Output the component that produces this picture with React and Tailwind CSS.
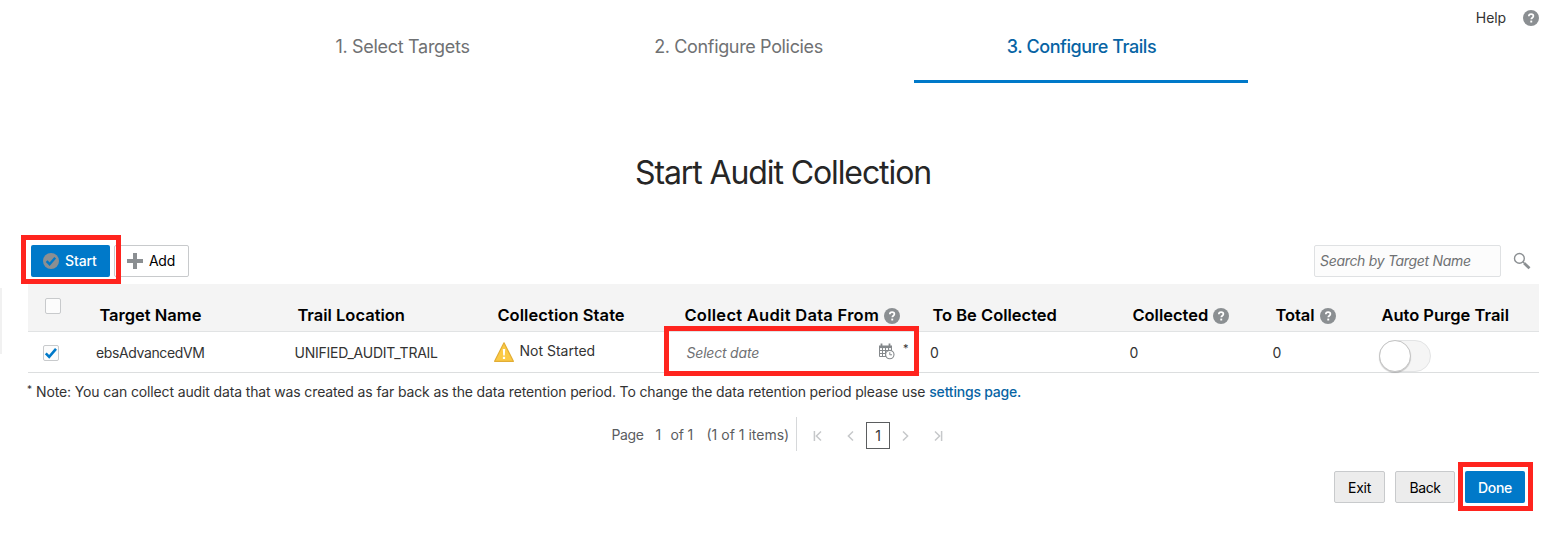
import React from "react";

const COLS = "grid grid-cols-[64px_198px_200px_187px_248px_200px_143px_106px_165px]";

function HelpIcon({ className = "" }) {
  return (
    <svg width="16" height="16" viewBox="0 0 16 16" className={"shrink-0 " + className}>
      <circle cx="8" cy="8" r="8" fill="#8b8f92" />
      <path d="M5.8 6.3c0-1.4 1-2.2 2.3-2.2s2.3.8 2.3 2c0 1.6-2.1 1.6-2.1 3.2" fill="none" stroke="#fff" strokeWidth="1.7" />
      <rect x="7.3" y="10.6" width="1.9" height="1.9" fill="#fff" />
    </svg>
  );
}

function Chevron({ flip = false, bar = false }) {
  return (
    <svg width="10" height="12" viewBox="0 0 10 12" fill="none" stroke="#c6c8ca" strokeWidth="1.5">
      <g transform={flip ? "translate(10 0) scale(-1 1)" : undefined}>
        <path d="M8 1.5 3.4 6 8 10.5" />
        {bar && <path d="M1.4 1v10" />}
      </g>
    </svg>
  );
}

function CalendarClock() {
  return (
    <svg width="17" height="17" viewBox="0 0 17 17" fill="none" stroke="#85898c">
      <path d="M1 2.5h13v2.6H1z" fill="#85898c" stroke="none" />
      <path d="M3.5 0.6v3M11.5 0.6v3" strokeWidth="1.8" />
      <path d="M1.5 3v10.5h7M4.5 5v8.5M7.5 5v8.5M10.5 5v2M13.5 4v3M1 7.5h10M1 10.5h7" />
      <circle cx="11.8" cy="11.6" r="4.2" fill="#fff" strokeWidth="1.1" />
      <path d="M11.8 9.2v2.6h2.2" />
    </svg>
  );
}

function Warning() {
  return (
    <svg width="20" height="20" viewBox="0 0 20 20" className="-mt-px shrink-0">
      <path d="M10 .8 19.4 19.3H.6z" fill="#fbca45" stroke="#e2ad35" strokeWidth="1.2" strokeLinejoin="round" />
      <path d="M8.8 7h2.4l-.4 6.4H9.2z" fill="#fff" />
      <rect x="8.9" y="14.8" width="2.2" height="2.2" fill="#fff" />
    </svg>
  );
}

function Highlight({ className }) {
  return <div className={"pointer-events-none absolute border-5 border-[#ff241e] " + className} />;
}

function Head({ children, className = "", help = false }) {
  return (
    <div className={"flex items-start whitespace-nowrap pl-[7.4px] pt-[21px] text-[16.5px] font-semibold leading-5 text-black " + className}>
      <span>{children}</span>
      {help && <HelpIcon className="ml-[5px] mt-[3px]" />}
    </div>
  );
}

export default function App() {
  return (
    <div className="relative flex h-[560px] w-[1556px] flex-col overflow-hidden bg-white font-['Inter',sans-serif] text-sm leading-5 text-[#333]">
      <header className="flex h-[83px] shrink-0">
        <nav className="ml-[242px] flex whitespace-nowrap text-center text-lg leading-6 text-[#6f7173]">
          <div className="w-[320px] pl-px pt-[35px] tracking-[-0.3px]">1. Select Targets</div>
          <div className="w-[352px] pl-px pt-[35px] tracking-[-0.35px]">2. Configure Policies</div>
          <div className="w-[334px] border-b-3 border-[#0079c9] pl-px pt-[35px] font-medium tracking-[-0.45px] text-[#0764a4]">3. Configure Trails</div>
        </nav>
        <div className="ml-auto flex h-9 items-center gap-[17px] pr-[17px]">
          <span className="tracking-[-0.1px]">Help</span>
          <HelpIcon />
        </div>
      </header>

      <h1 className="mt-[70px] w-[1566px] shrink-0 text-center text-[32px] font-normal leading-10 tracking-[-1.1px] text-[#262626]">
        Start Audit Collection
      </h1>

      <div className="ml-[31px] mr-[25px] mt-[52px] flex h-8 shrink-0 items-center">
        <button className="flex h-8 w-[79px] items-center rounded-[2px] bg-[#0079c9] pl-3 font-medium tracking-[-0.1px] text-white">
          <svg width="16" height="16" viewBox="0 0 16 16" className="mr-1.5">
            <circle cx="8" cy="8" r="8" fill="#8b8f92" />
            <path d="m3.6 8.2 3 3 5.6-6.4" fill="none" stroke="#0079c9" strokeWidth="2.4" />
          </svg>
          Start
        </button>
        <button className="ml-1 flex h-8 w-[75px] items-center rounded-[2px] border border-[#c8cacc] bg-white pl-3 tracking-[-0.3px] text-black">
          <svg width="16" height="16" viewBox="0 0 16 16" className="mr-1.5">
            <path d="M8 0v16M0 8h16" stroke="#8b8f92" strokeWidth="4" />
          </svg>
          Add
        </button>
        <input
          className="ml-auto h-8 w-[187px] rounded-[2px] border border-[#dfe1e3] bg-[#fcfcfc] px-[5px] pb-0.5 italic tracking-[-0.31px] outline-none placeholder:text-[#6f7173]"
          placeholder="Search by Target Name"
        />
        <svg width="18" height="18" viewBox="0 0 18 18" fill="none" stroke="#8b8f92" className="ml-3">
          <circle cx="6.4" cy="6.4" r="4.9" strokeWidth="1.4" />
          <path d="m10 10 1.6 1.6" strokeWidth="1.4" />
          <path d="m11.2 11.2 5.3 5" strokeWidth="2.8" />
        </svg>
      </div>

      <section className="ml-7 mt-[7px] w-[1511px] shrink-0">
        <div className={COLS + " h-12 border-b border-[#e1e3e4] bg-[#f4f4f4]"}>
          <div className="pl-[17px] pt-[14px]">
            <div className="h-4 w-4 rounded-[2px] border border-[#c8cacc] bg-[#fcfcfc]" />
          </div>
          <Head>Target Name</Head>
          <Head>Trail Location</Head>
          <Head className="tracking-[0.07px]">Collection State</Head>
          <Head className="font-bold tracking-[0.02px]" help>
            <span className="tracking-[0.28px]">Collect Audit Data From</span>
          </Head>
          <Head>To Be Collected</Head>
          <Head help>Collected</Head>
          <Head className="tracking-[-0.05px]" help>Total</Head>
          <Head>Auto Purge Trail</Head>
        </div>
        <div className={COLS + " h-[41px] whitespace-nowrap border-b border-[#dcdedf] pt-[11px]"}>
          <div className="pl-[15px] pt-0.5">
            <div className="h-4 w-4 rounded-[2px] border border-[#c8cacc] bg-[#fcfcfc]">
              <svg width="14" height="14" viewBox="0 0 14 14">
                <path d="m1.8 7.4 3.4 3.5 6.8-8" fill="none" stroke="#0079c9" strokeWidth="2.6" />
              </svg>
            </div>
          </div>
          <div className="pl-1 tracking-[-0.38px]">ebsAdvancedVM</div>
          <div className="pl-[4.5px] tracking-[-0.25px]">UNIFIED_AUDIT_TRAIL</div>
          <div className="flex items-start pl-1">
            <Warning />
            <span className="-mt-0.5 ml-[5.5px]">Not Started</span>
          </div>
          <div className="flex items-start pl-[9.5px]">
            <span className="w-[191.5px] italic tracking-[-0.2px] text-[#6f7173]">Select date</span>
            <CalendarClock />
            <span className="-mt-[5px] ml-2 text-[11px]">*</span>
          </div>
          <div className="pl-[5px]">0</div>
          <div className="pl-[4.5px]">0</div>
          <div className="pl-[4.5px]">0</div>
          <div className="-mt-[3px] pl-[5px]">
            <div className="h-8 w-[52px] rounded-full border border-[#e3e4e5] bg-[#f5f5f5]">
              <div className="-ml-px -mt-px h-8 w-8 rounded-full border border-[#c4c4c4] bg-white shadow-[0_1px_1px_rgba(0,0,0,0.2)]" />
            </div>
          </div>
        </div>
      </section>

      <div className="ml-[27px] mt-[9px] flex shrink-0 whitespace-nowrap">
        <span className="-mt-[3px] w-[9px] text-[10px]">*</span>
        <span className="tracking-[-0.134px]">
          Note: You can collect audit data that was created as far back as the data retention period. To change the data retention period please use
        </span>
        <a className="ml-1 font-medium tracking-[-0.2px] text-[#0764a4]">settings page.</a>
      </div>

      <div className="ml-[611.5px] mt-[15px] flex h-[34px] shrink-0 items-center whitespace-nowrap text-[#5b5d5f]">
        <span className="w-11 pt-px tracking-[-0.4px]">Page</span>
        <span className="w-[15px] pt-px">1</span>
        <span className="w-9 pt-px tracking-[-0.17px]">of 1</span>
        <span className="w-[89.5px] pt-0.5">(1 of 1 items)</span>
        <span className="h-full w-px bg-[#d6d8da]" />
        <div className="flex items-center pl-4 pt-[3px]">
          <Chevron bar />
          <span className="ml-[22px] flex"><Chevron /></span>
          <span className="ml-[11px] flex h-[27px] w-6 items-center justify-center border border-[#5b5d5f] text-[#333]">1</span>
          <span className="ml-[11px] flex"><Chevron flip /></span>
          <span className="ml-[22px] flex"><Chevron flip bar /></span>
        </div>
      </div>

      <div className="ml-[1334px] mt-5 flex h-8 shrink-0 text-black">
        <button className="w-[51px] rounded-[2px] border border-[#c8cacc] bg-[#ececec] pt-0.5 tracking-[-0.3px]">Exit</button>
        <button className="ml-2.5 w-[60px] rounded-[2px] border border-[#c8cacc] bg-[#ececec] pt-0.5 tracking-[-0.45px]">Back</button>
        <button className="ml-2.5 w-[60px] rounded-[2px] bg-[#0079c9] pt-0.5 font-medium tracking-[-0.3px] text-white">Done</button>
      </div>

      <div className="absolute left-0 top-[288px] h-[66px] w-0.5 bg-[#f1f1f1]" />
      <Highlight className="left-[21px] top-[235px] h-[49px] w-[100px]" />
      <Highlight className="left-[664px] top-[326px] h-[50px] w-[255px]" />
      <Highlight className="left-[1458px] top-[462px] h-[49px] w-[75px]" />
    </div>
  );
}
